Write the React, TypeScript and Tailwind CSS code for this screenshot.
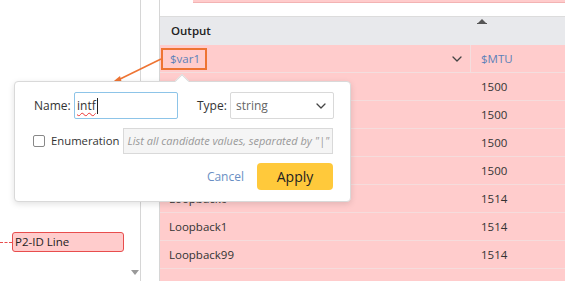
import React from "react"

const rows = [
  { name: "Ethernet0/0", mtu: "1500" },
  { name: "Ethernet0/1", mtu: "1500" },
  { name: "Ethernet0/2", mtu: "1500" },
  { name: "Ethernet0/3", mtu: "1500" },
  { name: "Loopback0", mtu: "1514" },
  { name: "Loopback1", mtu: "1514" },
  { name: "Loopback99", mtu: "1514" },
  { name: "", mtu: "" },
]

function Chevron({ className }: { className?: string }) {
  return (
    <svg className={className} width="10" height="6" viewBox="0 0 10 6" fill="none">
      <path d="M1 1l4 4 4-4" stroke="#444" strokeWidth="1.3" strokeLinecap="round" strokeLinejoin="round" />
    </svg>
  )
}

export default function App() {
  return (
    <div
      className="relative flex w-[565px] h-[281px] overflow-hidden bg-white text-[11.5px] text-[#333]"
      style={{ fontFamily: "'Open Sans', 'Noto Sans', sans-serif" }}
    >
      {/* left canvas */}
      <div className="relative w-[141px] shrink-0 border-r border-[#d6d6d6]">
        <div className="flex items-center pt-[232px]">
          <div className="w-[12px] border-t border-dashed border-[#e84d4d]" />
          <div className="flex h-[20px] w-[112px] items-center rounded-[3px] border border-[#e84d4d] bg-[#ffcccc] pl-[2px] text-[#222]">
            P2-ID Line
          </div>
        </div>
        <div className="absolute bottom-[6px] right-[1px] h-0 w-0 border-x-[4px] border-t-[5px] border-x-transparent border-t-[#999]" />
      </div>

      <div className="w-[18px] shrink-0" />

      {/* table panel */}
      <div className="flex flex-1 flex-col border-l border-[#d6d6d6]">
        <div className="h-[16px] shrink-0 pl-[33px]">
          <div className="h-[3px] border-b border-[#f3b3b3] bg-[#ffcccc]" />
        </div>
        <div className="flex h-[29px] shrink-0 border-t border-[#dcdcdc] bg-[#e8e9ec]">
          <div className="flex w-[311px] items-center pl-[11px] font-semibold text-[#222]">Output</div>
          <div className="relative flex-1">
            <div className="absolute left-[6px] top-[2px] flex flex-col items-center">
              <div className="h-0 w-0 border-x-[4px] border-b-[4px] border-x-transparent border-b-[#555]" />
              <div className="h-[1px] w-[10px] bg-[#555]" />
            </div>
          </div>
        </div>
        <div className="flex h-[28px] shrink-0 border-b border-[#f3dede] bg-[#ffcccc]">
          <div className="flex w-[311px] items-center justify-between border-r border-[#f3dede] pr-[8px]">
            <div className="ml-[1px] flex h-[22px] w-[46px] items-center border-2 border-[#ee7433] pl-[7px] text-[#5b80b8]">
              $var1
            </div>
            <Chevron />
          </div>
          <div className="flex flex-1 items-center pl-[10px] text-[#5b80b8]">$MTU</div>
        </div>
        {rows.map((r, i) => (
          <div key={i} className="flex h-[28px] shrink-0 border-b border-[#f5dcdc] bg-[#ffcccc]">
            <div className="flex w-[311px] items-center pl-[9px]">{r.name}</div>
            <div className="flex flex-1 items-center pl-[10px]">{r.mtu}</div>
          </div>
        ))}
      </div>

      {/* connector arrow */}
      <svg className="absolute left-[100px] top-[50px]" width="70" height="45" viewBox="0 0 70 45">
        <line x1="61" y1="9" x2="16" y2="31" stroke="#ee7433" strokeWidth="1.6" />
        <polygon points="9,35 20,26 22,33" fill="#ee7433" />
      </svg>

      {/* popover */}
      <div className="absolute left-[14px] top-[81px] h-[121px] w-[337px] rounded-[4px] border border-[#d9d9d9] bg-white shadow-[0_2px_6px_rgba(0,0,0,0.12)]">
        <div className="absolute -top-[6px] left-[162px] h-[10px] w-[10px] rotate-45 border-l border-t border-[#d9d9d9] bg-white" />
        <div className="flex flex-col pl-[18px] pr-[17px] pt-[10px] text-[12px] text-[#333]">
          <div className="flex items-center">
            <span className="w-[41px] shrink-0 pl-[1px]">Name:</span>
            <div className="flex h-[27px] w-[104px] shrink-0 items-center rounded-[2px] border border-[#8dc4e8] pl-[2px]">
              <span className="underline decoration-wavy decoration-[#e33] decoration-1 underline-offset-2">intf</span>
              <span className="ml-[1px] h-[16px] w-[1px] bg-[#222]" />
            </div>
            <span className="ml-[19px] w-[33px] shrink-0">Type:</span>
            <div className="flex h-[27px] w-[104px] shrink-0 items-center justify-between rounded-[2px] border border-[#d9d9d9] pl-[5px] pr-[7px] text-[#666]">
              string
              <Chevron />
            </div>
          </div>
          <div className="mt-[9px] flex items-center">
            <div className="h-[12px] w-[12px] shrink-0 rounded-[2px] border border-[#888]" />
            <span className="ml-[6px] shrink-0 text-[11.3px]">Enumeration</span>
            <div className="ml-[4px] flex h-[26px] min-w-0 flex-1 items-center overflow-hidden whitespace-nowrap border border-[#d9d9d9] bg-[#f5f5f5] pl-[3px] text-[11px] italic text-[#999]">
              List all candidate values, separated by "|"
            </div>
          </div>
          <div className="mt-[9px] flex items-center justify-end">
            <span className="mr-[13px] text-[#6a8fc4]">Cancel</span>
            <div className="flex h-[27px] w-[76px] items-center justify-center rounded-[4px] bg-[#ffc93b] text-[14px] text-[#222]">
              Apply
            </div>
          </div>
        </div>
      </div>
    </div>
  )
}
